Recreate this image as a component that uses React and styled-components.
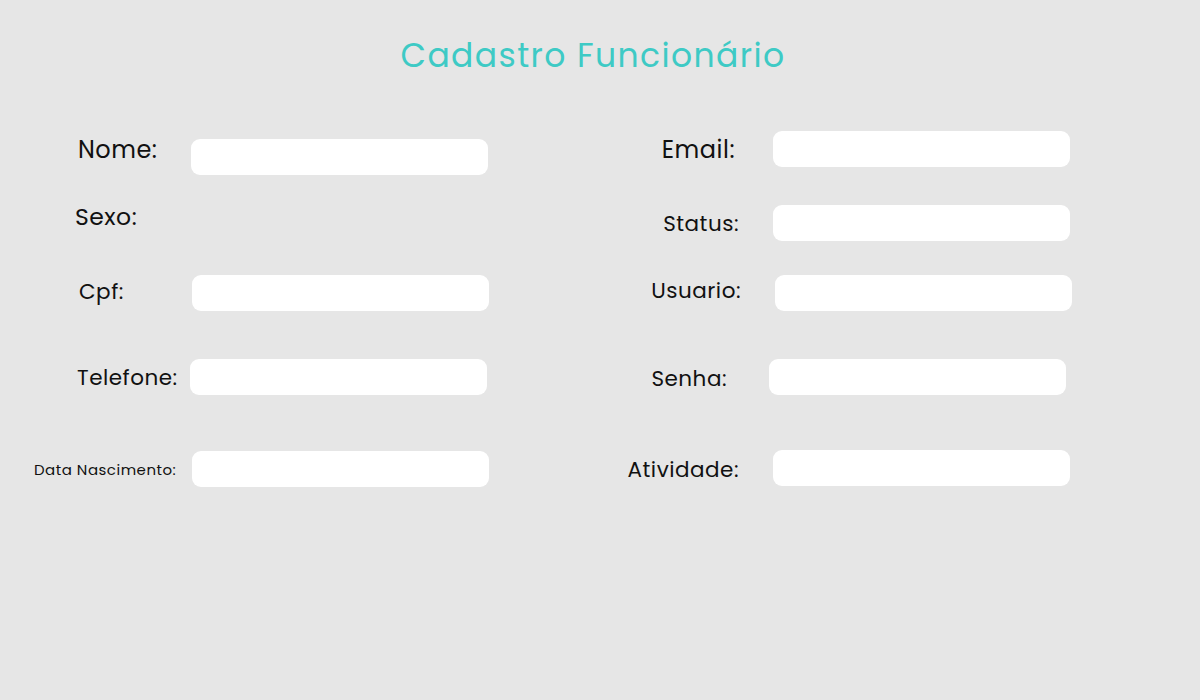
import React from 'react';
import styled, { createGlobalStyle } from 'styled-components';

const GlobalStyle = createGlobalStyle`
  body {
    margin: 0;
    background: #e6e6e6;
    font-family: "Poppins", "Inter", "Noto Sans", sans-serif;
  }
`;

const Page = styled.div`
  width: 1200px;
  height: 700px;
  background: #e6e6e6;
  overflow: hidden;
`;

const Title = styled.h1`
  margin: 0;
  padding: 36px 14px 0 0;
  height: 40px;
  line-height: 40px;
  text-align: center;
  font-size: 33px;
  font-weight: 400;
  letter-spacing: 1.4px;
  color: #3ecac5;
`;

const Columns = styled.div`
  display: grid;
  grid-template-columns: 600px 600px;
`;

const Column = styled.div`
  display: flex;
  flex-direction: column;
`;

const Row = styled.div`
  display: grid;
  grid-template-columns: ${(p) => p.labelCol}px 297px;
  grid-template-rows: 36px;
  align-items: center;
  height: 36px;
  margin-top: ${(p) => p.gap}px;
`;

const Label = styled.label`
  justify-self: ${(p) => (p.end ? 'end' : 'start')};
  margin-left: ${(p) => p.ml || 0}px;
  margin-right: ${(p) => p.mr || 0}px;
  margin-bottom: ${(p) => p.lift || 0}px;
  font-size: ${(p) => p.size || 21.5}px;
  letter-spacing: 0.5px;
  color: #111;
  white-space: nowrap;
`;

const Input = styled.input`
  box-sizing: border-box;
  width: 297px;
  height: 36px;
  margin-left: ${(p) => p.shift || 0}px;
  border: none;
  border-radius: 9px;
  background: #fff;
  outline: none;
  padding: 0 12px;
  font-family: inherit;
  font-size: 16px;
`;

const left = [
  { label: 'Nome:', gap: 63, ml: 78, lift: 16, size: 24 },
  { label: 'Sexo:', gap: 23, ml: 75, size: 23.5, noInput: true },
  { label: 'Cpf:', gap: 41, ml: 79, shift: 1, lift: 4 },
  { label: 'Telefone:', gap: 48, ml: 77, shift: -1 },
  { label: 'Data Nascimento:', gap: 56, ml: 34, size: 15, shift: 1 },
];

const right = [
  { label: 'Email:', gap: 55, mr: 38, size: 24 },
  { label: 'Status:', gap: 38, mr: 34 },
  { label: 'Usuario:', gap: 34, mr: 32, shift: 2, lift: 5 },
  { label: 'Senha:', gap: 48, mr: 46, shift: -4, lift: -3 },
  { label: 'Atividade:', gap: 55, mr: 34, lift: -2 },
];

function Field({ f, labelCol, end }) {
  return (
    <Row gap={f.gap} labelCol={labelCol}>
      <Label end={end} ml={f.ml} mr={f.mr} lift={f.lift} size={f.size}>
        {f.label}
      </Label>
      {!f.noInput && <Input type="text" shift={f.shift} />}
    </Row>
  );
}

export default function App() {
  return (
    <Page>
      <GlobalStyle />
      <Title>Cadastro Funcionário</Title>
      <Columns>
        <Column>
          {left.map((f) => (
            <Field key={f.label} f={f} labelCol={191} />
          ))}
        </Column>
        <Column>
          {right.map((f) => (
            <Field key={f.label} f={f} labelCol={173} end />
          ))}
        </Column>
      </Columns>
    </Page>
  );
}
